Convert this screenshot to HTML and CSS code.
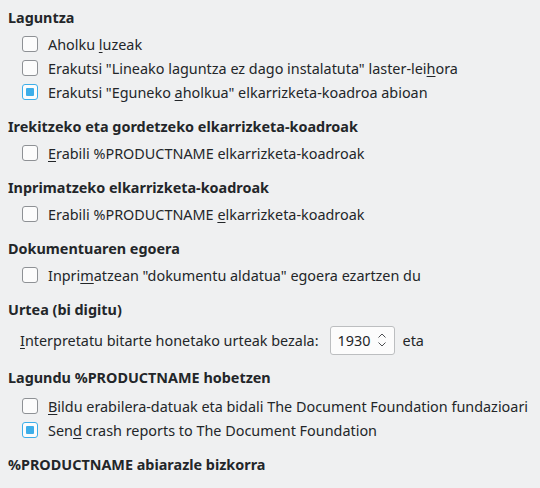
FILE: index.html
```html
<!DOCTYPE html>
<html>
<head>
<meta charset="utf-8">
<link rel="stylesheet" href="styles.css">
</head>
<body>
<div class="page">
  <section class="section">
    <div class="heading">Laguntza</div>
    <div class="options">
      <label class="row"><span class="box"></span><span>Aholku <u>l</u>uzeak</span></label>
      <label class="row"><span class="box"></span><span>Erakutsi "Lineako laguntza ez dago instalatuta" laster-lei<u>h</u>ora</span></label>
      <label class="row"><span class="box checked"></span><span>Erakutsi "Eguneko <u>a</u>holkua" elkarrizketa-koadroa abioan</span></label>
    </div>
  </section>
  <section class="section">
    <div class="heading">Irekitzeko eta gordetzeko elkarrizketa-koadroak</div>
    <div class="options">
      <label class="row"><span class="box"></span><span><u>E</u>rabili %PRODUCTNAME elkarrizketa-koadroak</span></label>
    </div>
  </section>
  <section class="section">
    <div class="heading">Inprimatzeko elkarrizketa-koadroak</div>
    <div class="options">
      <label class="row"><span class="box"></span><span>Erabili %PRODUCTNAME <u>e</u>lkarrizketa-koadroak</span></label>
    </div>
  </section>
  <section class="section">
    <div class="heading">Dokumentuaren egoera</div>
    <div class="options">
      <label class="row"><span class="box"></span><span>Inpri<u>m</u>atzean "dokumentu aldatua" egoera ezartzen du</span></label>
    </div>
  </section>
  <section class="section">
    <div class="heading">Urtea (bi digitu)</div>
    <div class="options">
      <div class="year-row">
        <span><u>I</u>nterpretatu bitarte honetako urteak bezala:</span>
        <span class="spin"><span class="spin-val">1930</span>
          <svg class="spin-arrows" width="10" height="18" viewBox="0 0 10 18"><path d="M1.5 6.5 L5 3 L8.5 6.5" fill="none" stroke="#4d4f52" stroke-width="1"/><path d="M1.5 11.5 L5 15 L8.5 11.5" fill="none" stroke="#4d4f52" stroke-width="1"/></svg>
        </span>
        <span>eta</span>
      </div>
    </div>
  </section>
  <section class="section improve">
    <div class="heading">Lagundu %PRODUCTNAME hobetzen</div>
    <div class="options">
      <label class="row"><span class="box"></span><span><u>B</u>ildu erabilera-datuak eta bidali The Document Foundation fundazioari</span></label>
      <label class="row"><span class="box checked"></span><span>Sen<u>d</u> crash reports to The Document Foundation</span></label>
    </div>
  </section>
  <section class="section">
    <div class="heading">%PRODUCTNAME abiarazle bizkorra</div>
  </section>
</div>
</body>
</html>
```
FILE: styles.css
```css
html, body {
  margin: 0;
  padding: 0;
  background: #eff0f1;
}
body {
  font-family: "Noto Sans", sans-serif;
  font-size: 14.4px;
  color: #232629;
  width: 540px;
  height: 488px;
  overflow: hidden;
}
.page {
  padding: 8px 0 0 8px;
  display: flex;
  flex-direction: column;
  gap: 13px;
}
.heading {
  font-weight: bold;
  height: 20px;
  line-height: 20px;
}
.options {
  display: flex;
  flex-direction: column;
  padding-top: 4px;
}
.row {
  display: flex;
  align-items: center;
  height: 24px;
  padding-left: 14px;
  gap: 10px;
}
.box {
  width: 14px;
  height: 14px;
  border: 1px solid #8e9195;
  border-radius: 3px;
  background: #fcfcfc;
  flex: none;
  box-sizing: content-box;
  position: relative;
}
.box.checked {
  border-color: #3daee9;
}
.box.checked::after {
  content: "";
  position: absolute;
  left: 3px;
  top: 3px;
  width: 8px;
  height: 8px;
  background: #3daee9;
  border-radius: 1px;
}
u {
  text-decoration-thickness: 1px;
  text-underline-offset: 2px;
}
.options .year-row {
  display: flex;
  align-items: center;
  height: 30px;
  padding-left: 12px;
  margin-top: 1px;
}
.spin {
  display: flex;
  align-items: center;
  justify-content: space-between;
  width: 65px;
  height: 29px;
  box-sizing: border-box;
  border: 1px solid #bcbec0;
  border-radius: 3px;
  background: #fcfcfc;
  padding: 0 7px 0 7px;
  margin: 0 8px 0 11px;
}
.improve .options {
  padding-top: 6px;
}
```
